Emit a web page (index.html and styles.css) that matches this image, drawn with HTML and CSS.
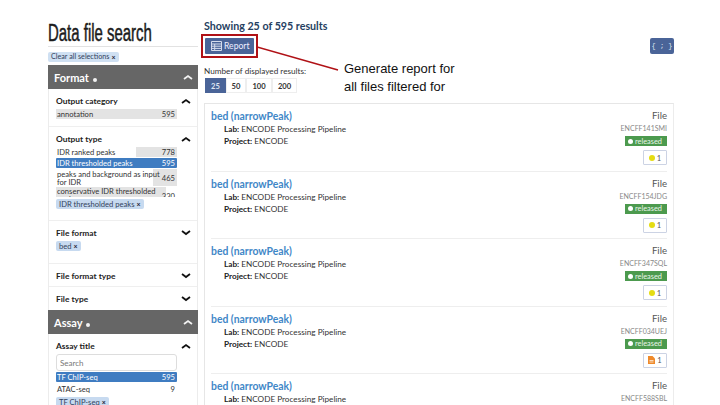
FILE: index.html
```html
<!DOCTYPE html>
<html lang="en">
<head>
<meta charset="utf-8">
<title>Data file search</title>
<link rel="stylesheet" href="styles.css">
</head>
<body>
<svg width="0" height="0" class="defs">
  <symbol id="up" viewBox="0 0 10 6"><path d="M1 5 L5 2 L9 5" fill="none" stroke="currentColor" stroke-width="1.8"/></symbol>
  <symbol id="down" viewBox="0 0 10 6"><path d="M1 1 L5 4 L9 1" fill="none" stroke="currentColor" stroke-width="1.8"/></symbol>
</svg>
<div class="page">
  <aside class="side">
    <h1 class="title"><span>Data file search</span></h1>
    <div class="clear-wrap"><span class="chip chip-clear">Clear all selections <b>×</b></span></div>

    <div class="group-head"><span>Format <i class="dot"></i></span><svg class="chev"><use href="#up"/></svg></div>
    <div class="facets">
      <section class="facet f-cat">
        <div class="facet-head"><span>Output category</span><svg class="chev"><use href="#up"/></svg></div>
        <div class="term"><span class="fill w100"></span><span class="tl">annotation</span><span class="tn">595</span></div>
      </section>
      <section class="facet f-type">
        <div class="facet-head"><span>Output type</span><svg class="chev"><use href="#up"/></svg></div>
        <div class="term"><span class="fill w34 r"></span><span class="tl">IDR ranked peaks</span><span class="tn">778</span></div>
        <div class="term sel"><span class="tl">IDR thresholded peaks</span><span class="tn">595</span></div>
        <div class="term two"><span class="fill w20 r"></span><span class="tl">peaks and background as input for IDR</span><span class="tn">465</span></div>
        <div class="term clip"><span class="fill w91"></span><span class="tl">conservative IDR thresholded peaks</span><span class="tn">330</span></div>
        <div class="chips"><span class="chip">IDR thresholded peaks <b>×</b></span></div>
      </section>
      <section class="facet f-fmt">
        <div class="facet-head"><span>File format</span><svg class="chev"><use href="#down"/></svg></div>
        <div class="chips tight"><span class="chip">bed <b>×</b></span></div>
      </section>
      <section class="facet f-small">
        <div class="facet-head"><span>File format type</span><svg class="chev"><use href="#down"/></svg></div>
      </section>
      <section class="facet f-small last">
        <div class="facet-head"><span>File type</span><svg class="chev"><use href="#down"/></svg></div>
      </section>
    </div>

    <div class="group-head"><span>Assay <i class="dot"></i></span><svg class="chev"><use href="#up"/></svg></div>
    <div class="facets">
      <section class="facet">
        <div class="facet-head"><span>Assay title</span><svg class="chev"><use href="#up"/></svg></div>
        <input class="search" type="text" placeholder="Search">
        <div class="term sel"><span class="tl">TF ChIP-seq</span><span class="tn">595</span></div>
        <div class="term plain"><span class="tl">ATAC-seq</span><span class="tn">9</span></div>
        <div class="chips"><span class="chip">TF ChIP-seq <b>×</b></span></div>
      </section>
    </div>
  </aside>

  <main class="main">
    <h2 class="count">Showing 25 of 595 results</h2>
    <div class="toolbar">
      <button class="btn-report">
        <svg width="11" height="10" viewBox="0 0 11 10"><path d="M.5.5h10v9H.5zM.5 3h10M.5 5.2h10M.5 7.4h10M3.7 3v6.5" fill="none" stroke="#d5dcec" stroke-width="1"/></svg>
        Report
      </button>
      <button class="btn-json">{ ; }</button>
    </div>
    <div class="limit-label">Number of displayed results:</div>
    <div class="limit">
      <span class="on">25</span><span>50</span><span>100</span><span>200</span>
    </div>

    <div class="results">
      <article class="row">
        <div class="info">
          <a class="name">bed (narrowPeak)</a>
          <p class="meta"><b>Lab:</b> ENCODE Processing Pipeline</p>
          <p class="meta"><b>Project:</b> ENCODE</p>
        </div>
        <div class="status">
          <span class="kind">File</span>
          <span class="acc">ENCFF141SMI</span>
          <span class="rel"><i></i>released</span>
          <span class="audit"><i class="yc"></i>1</span>
        </div>
      </article>
      <article class="row">
        <div class="info">
          <a class="name">bed (narrowPeak)</a>
          <p class="meta"><b>Lab:</b> ENCODE Processing Pipeline</p>
          <p class="meta"><b>Project:</b> ENCODE</p>
        </div>
        <div class="status">
          <span class="kind">File</span>
          <span class="acc">ENCFF154JDG</span>
          <span class="rel"><i></i>released</span>
          <span class="audit"><i class="yc"></i>1</span>
        </div>
      </article>
      <article class="row">
        <div class="info">
          <a class="name">bed (narrowPeak)</a>
          <p class="meta"><b>Lab:</b> ENCODE Processing Pipeline</p>
          <p class="meta"><b>Project:</b> ENCODE</p>
        </div>
        <div class="status">
          <span class="kind">File</span>
          <span class="acc">ENCFF347SQL</span>
          <span class="rel"><i></i>released</span>
          <span class="audit"><i class="yc"></i>1</span>
        </div>
      </article>
      <article class="row">
        <div class="info">
          <a class="name">bed (narrowPeak)</a>
          <p class="meta"><b>Lab:</b> ENCODE Processing Pipeline</p>
          <p class="meta"><b>Project:</b> ENCODE</p>
        </div>
        <div class="status">
          <span class="kind">File</span>
          <span class="acc">ENCFF034UEJ</span>
          <span class="rel"><i></i>released</span>
          <span class="audit"><svg width="7" height="8" viewBox="0 0 7 8"><path d="M0 0h4.5L7 2.5V8H0z" fill="#ef8a2b"/><path d="M1.5 4.5h4M1.5 6h4" stroke="#fff" stroke-width=".7"/></svg>1</span>
        </div>
      </article>
      <article class="row">
        <div class="info">
          <a class="name">bed (narrowPeak)</a>
          <p class="meta"><b>Lab:</b> ENCODE Processing Pipeline</p>
        </div>
        <div class="status">
          <span class="kind">File</span>
          <span class="acc">ENCFF588SBL</span>
        </div>
      </article>
    </div>
  </main>

  <div class="callout-box"></div>
  <svg class="callout-line" width="90" height="30" viewBox="0 0 90 30"><path d="M0 1 L81 24" stroke="#b01116" stroke-width="1.5" fill="none"/></svg>
  <p class="callout-text">Generate report for<br>all files filtered for</p>
</div>
</body>
</html>
```

FILE: styles.css
```css
* { box-sizing: border-box; }
html, body { margin: 0; height: 405px; overflow: hidden; background: #fff; }
body { font-family: Lato, "Noto Sans", sans-serif; color: #222; }
.defs { position: absolute; }
.page { position: relative; width: 720px; height: 405px; overflow: hidden; display: flex; padding: 0 0 0 48px; gap: 6px; }

.side { width: 150px; flex: none; padding-top: 20px; }
.title { margin: 0; height: 27px; padding: 2px 0 1px; border-bottom: 1px solid #e2e2e2; font: 400 23px/23px "Liberation Sans", sans-serif; color: #1b1b1b; white-space: nowrap; }
.title span { display: inline-block; transform: scaleX(.65); transform-origin: left center; -webkit-text-stroke: .5px #1b1b1b; }
.clear-wrap { height: 18px; padding-top: 5px; display: flex; align-items: flex-start; }
.chip { display: inline-flex; align-items: center; gap: 2px; height: 10px; padding: 0 3px; background: #c7daf0; border-radius: 2px; font-size: 7.6px; line-height: 10px; color: #33425c; white-space: nowrap; }
.chip b { font-size: 7px; color: #223; }
.chip-clear { background: #cfe0f2; font-size: 7.2px; }

.group-head { height: 24px; background: #666; color: #fff; display: flex; justify-content: space-between; align-items: center; padding: 0 5px 0 6px; font-size: 11px; font-weight: 700; }
.dot { display: inline-block; width: 4px; height: 4px; border-radius: 50%; background: #f2f2f2; margin-left: 1px; vertical-align: 0; }
.chev { width: 10px; height: 6px; color: inherit; flex: none; }
.group-head .chev { color: #f2f2f2; }

.facets { border: 1px solid #ececec; border-top: 0; border-bottom: 0; }
.facet { padding: 5px 0 0 7px; border-bottom: 1px solid #efefef; }
.facet.last { border-bottom: 0; }
.f-cat { height: 38px; }
.f-type { height: 94px; }
.f-fmt { height: 43px; }
.f-small { height: 23px; }
.facet-head { display: flex; justify-content: space-between; align-items: center; height: 13px; margin-bottom: 2px; padding-right: 6px; font-size: 8.4px; font-weight: 700; color: #222; }
.facet-head .chev { color: #111; }

.term { position: relative; width: 121px; height: 10px; display: flex; justify-content: space-between; align-items: center; padding: 0 2px 0 1px; font-size: 7.6px; line-height: 8px; color: #333; }
.term .tl, .term .tn { position: relative; }
.fill { position: absolute; top: 0; bottom: 0; left: 0; background: #e3e3e3; }
.fill.r { left: auto; right: 0; }
.w100 { width: 100%; }
.w91 { width: 91%; }
.w34 { width: 34%; }
.w20 { width: 20%; }
.term.sel { background: #3f7cc1; color: #fff; border-radius: 1px; margin-top: 1px; }
.term.two { height: 17px; margin-top: 1px; }
.term.two .tl { width: 105px; }
.term.clip { height: 10px; margin-top: 1px; overflow: hidden; align-items: flex-start; }
.term.clip .tl { width: 105px; }
.term.clip .tn { top: 5px; }
.chips { margin-top: 2px; display: flex; }
.chips.tight { margin-top: 0; }

.search { display: block; width: 121px; height: 17px; margin: 0 0 1px; padding: 0 3px; border: 1px solid #ddd; border-radius: 3px; font: 8px Lato, sans-serif; }
.search::placeholder { color: #777; opacity: 1; }
.term.plain { margin-top: 1px; height: 12px; }

.main { width: 470px; flex: none; padding-top: 19px; }
.count { margin: 0; font-size: 10.7px; line-height: 14px; font-weight: 700; color: #254061; }
.toolbar { display: flex; justify-content: space-between; align-items: center; margin-top: 5px; height: 16px; padding-left: 1px; }
.btn-report { display: flex; align-items: center; gap: 2px; width: 49px; height: 16px; padding: 0 0 0 6px; background: #4a6498; border: 0; border-radius: 1px; color: #eef; font: 8.6px Lato, sans-serif; }
.btn-json { width: 24px; height: 16px; background: #4a6498; border: 0; border-radius: 2px; padding: 0; color: #dfe6f3; font: 7px "Liberation Mono", monospace; }
.limit-label { margin-top: 12px; font-size: 8.2px; line-height: 10px; color: #333; }
.limit { display: flex; margin: 2px 0 0 1px; height: 15px; }
.limit span { display: flex; align-items: center; justify-content: center; height: 15px; width: 20px; border: 1px solid #eee; font-size: 7.6px; font-weight: 700; color: #333; }
.limit span:nth-child(n+3) { width: 26px; }
.limit span:last-child { width: 25px; }
.limit span.on { background: #4a6498; color: #dfe6f3; width: 21px; border-color: #4a6498; }

.results { margin-top: 10px; width: 470px; padding: 0 6px; border: 1px solid #e6e6e6; border-right-color: #ececec; }
.row { display: flex; justify-content: space-between; height: 67.5px; padding-top: 5px; border-bottom: 1px solid #eee; }
.name { display: block; font-size: 10.4px; line-height: 14px; font-weight: 700; color: #3f87c7; }
.meta { margin: 0 0 0 13px; font-size: 8.2px; line-height: 12px; color: #333; }
.meta b { font-weight: 700; color: #222; }
.status { display: flex; flex-direction: column; align-items: flex-end; }
.kind { font-size: 9.6px; line-height: 14px; color: #555; }
.acc { font-size: 7px; line-height: 11px; color: #888; }
.rel { display: flex; align-items: center; height: 10px; width: 42px; padding-left: 3px; gap: 2px; margin-top: 2px; background: #4c9a4e; color: #eaf5ea; font-size: 7.4px; }
.rel i { width: 5px; height: 5px; border-radius: 50%; background: #fff; }
.audit { display: flex; align-items: center; justify-content: center; gap: 2px; width: 24px; height: 15px; margin-top: 4px; border: 1px solid #ccd3e4; border-radius: 1px; font-size: 7.6px; color: #555; }
.yc { width: 6px; height: 6px; border-radius: 50%; background: #e5dc12; }

.callout-box { position: absolute; left: 201px; top: 34px; width: 57px; height: 24px; border: 2px solid #b01116; }
.callout-line { position: absolute; left: 257px; top: 46px; }
.callout-text { position: absolute; left: 344px; top: 60px; margin: 0; font: 13px/17.5px "Liberation Sans", Arial, sans-serif; color: #111; }
```
